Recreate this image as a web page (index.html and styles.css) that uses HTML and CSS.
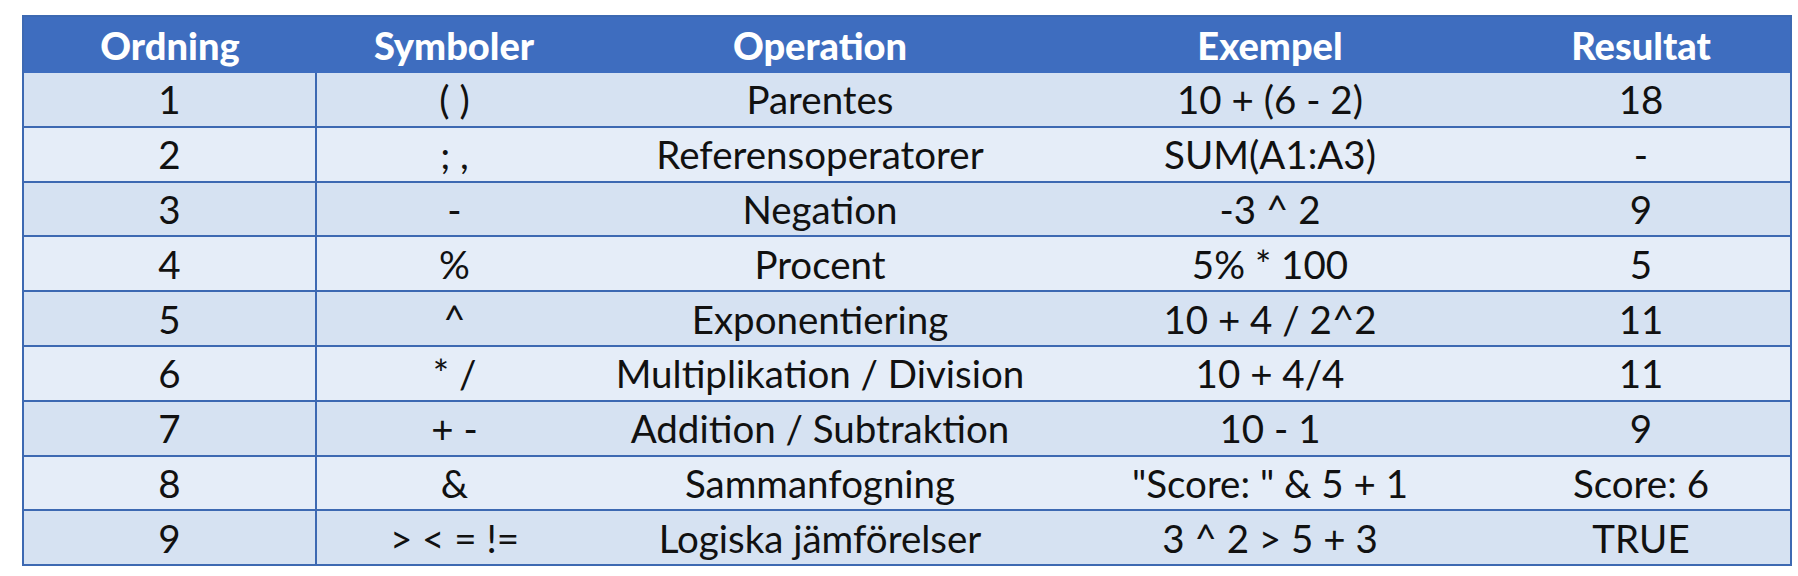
FILE: index.html
```html
<!DOCTYPE html>
<html lang="sv">
<head>
<meta charset="utf-8">
<title>Operatorprioritet</title>
<link rel="stylesheet" href="styles.css">
</head>
<body>
<table class="prio">
  <colgroup>
    <col class="c1"><col class="c2"><col class="c3"><col class="c4"><col class="c5">
  </colgroup>
  <thead>
    <tr><th>Ordning</th><th>Symboler</th><th>Operation</th><th>Exempel</th><th>Resultat</th></tr>
  </thead>
  <tbody>
    <tr><td class="first">1</td><td>( )</td><td>Parentes</td><td>10 + (6 - 2)</td><td>18</td></tr>
    <tr><td class="first">2</td><td>; ,</td><td>Referensoperatorer</td><td>SUM(A1:A3)</td><td>-</td></tr>
    <tr><td class="first">3</td><td>-</td><td>Negation</td><td>-3 ^ 2</td><td>9</td></tr>
    <tr><td class="first">4</td><td>%</td><td>Procent</td><td>5% * 100</td><td>5</td></tr>
    <tr><td class="first">5</td><td>^</td><td>Exponentiering</td><td>10 + 4 / 2^2</td><td>11</td></tr>
    <tr><td class="first">6</td><td>* /</td><td>Multiplikation / Division</td><td>10 + 4/4</td><td>11</td></tr>
    <tr><td class="first">7</td><td>+ -</td><td>Addition / Subtraktion</td><td>10 - 1</td><td>9</td></tr>
    <tr><td class="first">8</td><td>&amp;</td><td>Sammanfogning</td><td>"Score: " &amp; 5 + 1</td><td>Score: 6</td></tr>
    <tr><td class="first">9</td><td>&gt; &lt; = !=</td><td>Logiska jämförelser</td><td>3 ^ 2 &gt; 5 + 3</td><td>TRUE</td></tr>
  </tbody>
</table>
</body>
</html>
```

FILE: styles.css
```css
html, body {
  margin: 0;
  background: #ffffff;
}
body {
  padding: 15px 0 0 22px;
  font-family: Lato, "Open Sans", sans-serif;
}
.prio {
  width: 1768px;
  table-layout: fixed;
  border-collapse: collapse;
  border: 2px solid #3d69b2;
}
.c1 { width: 293px; }
.c2 { width: 276px; }
.c3 { width: 456px; }
.c4 { width: 444px; }
.c5 { width: 299px; }
.prio th {
  background: #3e6dbf;
  color: #ffffff;
  font-size: 38px;
  font-weight: 900;
  height: 56px;
  padding: 0;
  text-align: center;
  vertical-align: middle;
}
.prio td {
  height: 52.8px;
  padding: 0;
  text-align: center;
  vertical-align: middle;
  font-size: 38.5px;
  color: #111111;
  border-bottom: 2px solid #3d69b2;
}
.prio td.first {
  border-right: 2px solid #3d69b2;
}
.prio tbody tr:nth-child(odd) td { background: #d6e2f2; }
.prio tbody tr:nth-child(even) td { background: #e5edf8; }
```
